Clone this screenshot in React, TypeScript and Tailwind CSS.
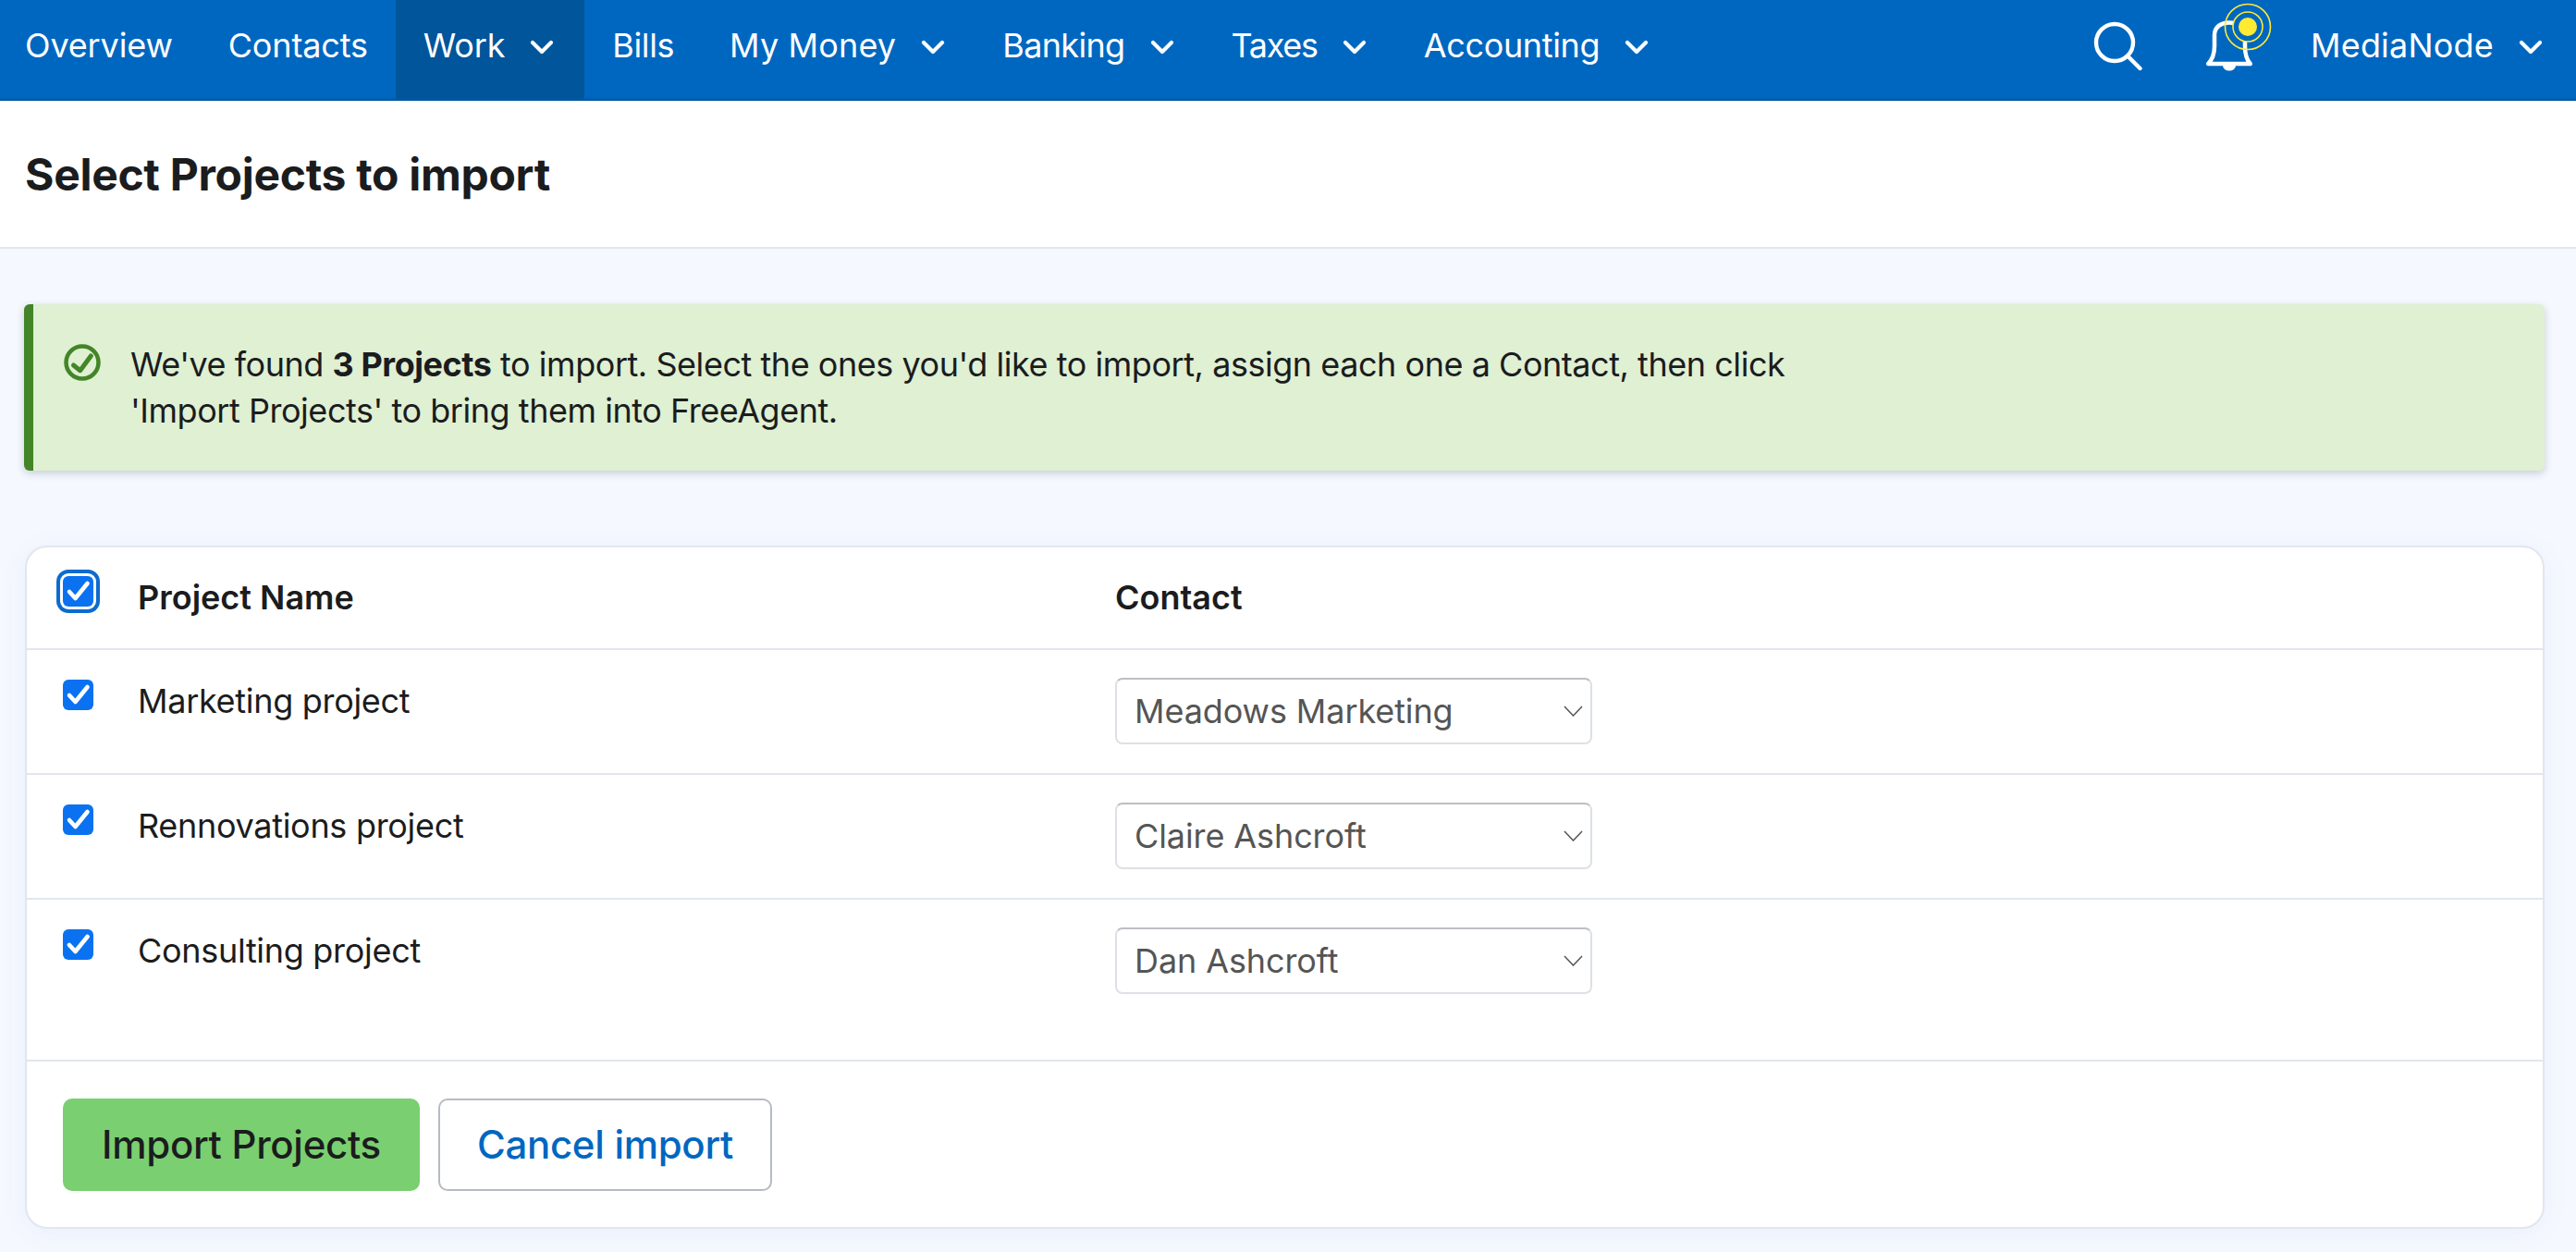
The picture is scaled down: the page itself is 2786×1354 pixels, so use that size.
const navItems = [
  { label: "Overview", first: true, spacing: "" },
  { label: "Contacts", spacing: "" },
  { label: "Work", caret: true, active: true, spacing: "" },
  { label: "Bills", spacing: "tracking-[-0.4px]" },
  { label: "My Money", caret: true, spacing: "tracking-[0.15px]" },
  { label: "Banking", caret: true, spacing: "tracking-[-0.65px]" },
  { label: "Taxes", caret: true, spacing: "tracking-[-1.3px]" },
  { label: "Accounting", caret: true, spacing: "tracking-[-0.35px]" },
];

const rows = [
  { name: "Marketing project", contact: "Meadows Marketing" },
  { name: "Rennovations project", contact: "Claire Ashcroft" },
  { name: "Consulting project", contact: "Dan Ashcroft" },
];

function Caret() {
  return (
    <svg viewBox="0 0 26 16" className="h-[16px] w-[26px]" fill="none" stroke="#ffffff" strokeWidth="4.2" strokeLinecap="round" strokeLinejoin="round">
      <path d="M3 3l10 10L23 3" />
    </svg>
  );
}

function Tick({ ring }: { ring?: boolean }) {
  return (
    <span
      className={`block h-[33px] w-[33px] rounded-[6px] bg-[#0a72f0] ${
        ring ? "shadow-[0_0_0_3px_#ffffff,0_0_0_7px_#0d6bcf]" : ""
      }`}
    >
      <svg viewBox="0 0 33 33" className="h-[33px] w-[33px]" fill="none" stroke="#ffffff" strokeWidth="4.6" strokeLinecap="round" strokeLinejoin="round">
        <path d="M7 17l6.5 7L26.5 8" />
      </svg>
    </span>
  );
}

function Bell() {
  return (
    <svg viewBox="0 0 80 80" className="h-[80px] w-[80px]" fill="none">
      <path
        d="M7.2 69C11 65 14 60 14 50V38C14 29 21 24.5 30 24.5C39 24.5 47 29 47 38V50C47 60 49 65 52.8 69Z"
        stroke="#ffffff"
        strokeWidth="4.5"
        strokeLinejoin="round"
      />
      <path d="M23 71a7 5.5 0 0 0 14 0z" fill="#ffffff" />
      <circle cx="50" cy="29" r="16" fill="#0067c0" stroke="#ffeb33" strokeWidth="1.6" />
      <circle cx="50" cy="29" r="24.5" stroke="#ffeb33" strokeWidth="1.6" />
      <circle cx="50" cy="29" r="10" fill="#ffeb33" />
    </svg>
  );
}

export default function App() {
  return (
    <div className="min-h-[1354px] bg-[#f5f8fe] font-['Inter',sans-serif] text-[36px] leading-[50px] tracking-[-0.3px] text-[#1b1c1e]">
      {/* Top nav */}
      <nav className="flex h-[109px] items-stretch justify-between bg-[#0067c0] pb-[2px] tracking-[-0.15px] shadow-[inset_0_-3px_2px_-1px_#00559b]">
        <ul className="flex">
          {navItems.map((item) => (
            <li
              key={item.label}
              className={`flex items-start pt-[24px] text-white ${item.first ? "pl-[27px]" : "pl-[30px]"} ${
                item.caret ? "pr-[32px]" : "pr-[30px]"
              } ${item.active ? "bg-[#00559b] pr-[33px]" : ""}`}
            >
              <span className={item.spacing}>{item.label}</span>
              {item.caret && (
                <span className="mt-[19px] ml-[27px]">
                  <Caret />
                </span>
              )}
            </li>
          ))}
        </ul>
        <div className="flex items-start pr-[36px] text-white">
          <svg viewBox="0 0 54 54" className="mt-[23px] mr-[63px] h-[54px] w-[54px]" fill="none" stroke="#ffffff" strokeWidth="4.4" strokeLinecap="round">
            <circle cx="23" cy="23" r="20" />
            <path d="M38 38.5L50.5 51" />
          </svg>
          <span className="mr-[38px]">
            <Bell />
          </span>
          <span className="pt-[24px] tracking-[0.2px]">MediaNode</span>
          <span className="mt-[43px] ml-[27px]">
            <Caret />
          </span>
        </div>
      </nav>

      {/* Page title */}
      <header className="flex h-[160px] items-start border-b-2 border-[#e2e6ed] bg-white pt-[55px] pl-[27px]">
        <h1 className="text-[48px] leading-[50px] font-bold tracking-[-0.3px]">Select Projects to import</h1>
      </header>

      <main className="pt-[60px] pr-[34px] pl-[26px]">
        {/* Success notice */}
        <div className="flex h-[180px] items-start rounded-[6px] border-l-[10px] border-[#438527] bg-[#dff0d3] pt-[40px] pl-[33px] tracking-[-0.46px] shadow-[0_3px_8px_rgba(40,50,90,0.22)]">
          <svg viewBox="0 0 40 40" className="mt-[3px] mr-[32px] h-[40px] w-[40px] shrink-0" fill="none" stroke="#438527" strokeLinecap="round" strokeLinejoin="round">
            <circle cx="20" cy="20" r="17.5" strokeWidth="4.5" />
            <path d="M10.5 23l7.2 5.7L29.3 13" strokeWidth="5" />
          </svg>
          <p>
            We've found <strong className="font-bold">3 Projects</strong> to import. Select the ones you'd like to import, assign each one a Contact, then click
            <br />
            'Import Projects' to bring them into FreeAgent.
          </p>
        </div>

        {/* Import table */}
        <section className="mt-[81px] ml-[1px] rounded-[24px] border-2 border-[#e2e6ed] bg-white shadow-[0_4px_30px_rgba(60,100,200,0.06)]">
          <div className="flex h-[111px] items-start border-b-2 border-[#e2e6ed] font-semibold tracking-[0px]">
            <div className="flex w-[1177px] pl-[39px]">
              <span className="mt-[31px] mr-[48px]">
                <Tick ring />
              </span>
              <span className="pt-[29px]">Project Name</span>
            </div>
            <span className="pt-[29px]">Contact</span>
          </div>

          {rows.map((row, i) => (
            <div key={row.name} className={`flex items-start border-b-2 border-[#e2e6ed] ${i === 2 ? "h-[175px]" : "h-[135px]"}`}>
              <div className="flex w-[1177px] pl-[39px]">
                <span className="mt-[32px] mr-[48px]">
                  <Tick />
                </span>
                <span className="pt-[30px]">{row.name}</span>
              </div>
              <div className="mt-[30px] flex h-[72px] w-[516px] items-center justify-between rounded-[8px] border-2 border-[#dde1e5] border-t-[#bcbfc3] pr-[8px] pl-[19px] tracking-[-0.1px] text-[#555555]">
                {row.contact}
                <svg viewBox="0 0 21 12" className="h-[12px] w-[21px]" fill="none" stroke="#555555" strokeWidth="1.5">
                  <path d="M1 1l9.5 10L20 1" />
                </svg>
              </div>
            </div>
          ))}

          <div className="flex gap-[20px] pt-[40px] pb-[39px] pl-[39px] text-[42px] tracking-[-0.3px]">
            <button className="h-[100px] w-[386px] rounded-[10px] bg-[#7acf70] text-center font-medium">Import Projects</button>
            <button className="h-[100px] w-[361px] rounded-[10px] border-2 border-[#b6bbc2] bg-white text-center font-medium text-[#0067c0]">Cancel import</button>
          </div>
        </section>
      </main>
    </div>
  );
}
